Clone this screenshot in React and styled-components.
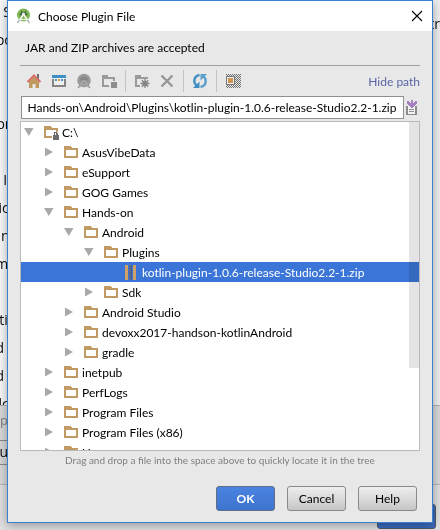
import React, { useEffect, useRef } from "react";
import styled, { createGlobalStyle, css } from "styled-components";

const GlobalStyle = createGlobalStyle`
  * { box-sizing: border-box; }
  body { margin: 0; font-family: Lato, "Open Sans", sans-serif; font-size: 12px; color: #000; }
  button, input { font: inherit; color: inherit; }
`;

const Page = styled.div`
  position: relative;
  display: flex;
  height: 100vh;
  min-height: 420px;
  padding: 0 7px 7px;
  overflow: hidden;
`;

/* ---------- window behind the dialog ---------- */
const Backdrop = styled.div`
  position: absolute;
  inset: 0;
  display: flex;
  flex-direction: column;
  background: #e0e0e0;
  overflow: hidden;
  font-family: "Open Sans", sans-serif;
  font-size: 14px;
  color: #111;
`;
const BackdropBody = styled.div`
  display: flex;
  flex: none;
  justify-content: space-between;
  height: 405px;
  background: linear-gradient(90deg, #fafafa 50%, #f0f0f0 50%);
  overflow: hidden;
`;
const Lines = styled.div`
  display: flex;
  flex-direction: column;
  align-items: center;
  width: 7px;
  padding-top: 12px;
  line-height: 0;
  white-space: pre;
`;
const Line = styled.span`
  flex: none;
  height: 28px;
`;
const Side = styled.div`
  display: flex;
  justify-content: flex-end;
  width: 8px;
  padding-top: 14px;
  line-height: 20px;
  white-space: nowrap;
`;
const BackdropPanel = styled.div`
  display: flex;
  flex: none;
  flex-direction: column;
  height: 80px;
  padding-top: 4px;
  gap: 10px;
  background: #dadada;
  border-top: 1px solid #b4b4b4;
  border-bottom: 1px solid #b4b4b4;
  line-height: 20px;
`;
const Faded = styled.span`
  color: #808080;
  font-size: 13px;
`;
const BackdropField = styled.div`
  display: flex;
  flex: none;
  justify-content: flex-end;
  width: 8px;
  height: 25px;
  border: solid #8c8c8c;
  border-width: 1px 0;
  background: #d8d8d8;
  line-height: 22px;
`;
const BackdropFooter = styled.div`
  display: flex;
  flex: 1;
  align-items: flex-end;
  justify-content: flex-end;
  padding: 0 4px 1px;
`;
const BackdropAction = styled.div`
  width: 59px;
  height: 25px;
  border: 1px solid #555b66;
  border-radius: 3px;
  background: #3a6bbf;
`;

/* ---------- dialog ---------- */
const Dialog = styled.section`
  position: relative;
  display: flex;
  flex-direction: column;
  flex: 1;
  min-width: 0;
  border: 1px solid #3a80cc;
  background: #e8e8e8;
  box-shadow: 0 2px 10px rgba(0, 0, 0, 0.35);
`;
const TitleBar = styled.header`
  display: flex;
  align-items: center;
  gap: 6px;
  flex: none;
  height: 30px;
  padding: 0 9px 0 8px;
  background: #fff;
`;
const Title = styled.h1`
  flex: 1;
  margin: 0;
  font-size: 12px;
  font-weight: 400;
`;
const IconButton = styled.button`
  display: flex;
  align-items: center;
  justify-content: center;
  flex: none;
  width: ${(p) => p.$width || 16}px;
  height: 16px;
  padding: 0;
  border: 0;
  background: none;
`;
const Content = styled.div`
  display: flex;
  flex-direction: column;
  flex: 1;
  min-height: 0;
  padding: 0 12px;
`;
const Prompt = styled.p`
  flex: none;
  margin: 0;
  height: 34px;
  padding-left: 5px;
  line-height: 34px;
`;
const Toolbar = styled.div`
  display: flex;
  align-items: center;
  flex: none;
  height: 31px;
  padding-left: 6px;
  gap: 9px;
  border-top: 1px solid #a0a0a0;
`;
const Divider = styled.span`
  width: 1px;
  height: 22px;
  margin: 0 -1px;
  background: #c4c4c4;
`;
const HideLink = styled.a`
  margin-left: auto;
  color: #5a66a6;
  text-decoration: none;
`;
const PathRow = styled.div`
  display: flex;
  align-items: center;
  flex: none;
  height: 23px;
`;
const PathInput = styled.input`
  flex: 1;
  min-width: 0;
  height: 23px;
  margin-left: 1px;
  padding: 0 7px 0 5px;
  border: 1px solid #8f8f8f;
  border-radius: 0;
  background: #fff;
  outline: 0;
`;
const TreeBox = styled.div`
  display: flex;
  flex: 1;
  min-height: 0;
  margin-top: 2px;
  border: 1px solid #b9b9b9;
  background: #fff;
  overflow: hidden;
`;
const Tree = styled.div`
  flex: 1;
  min-width: 0;
`;
const Row = styled.div`
  display: flex;
  align-items: center;
  height: 20px;
  padding-left: ${(p) => 2 + p.$level * 20}px;
  white-space: nowrap;
  ${(p) =>
    p.$selected &&
    css`
      color: #fff;
      background: #3a75d7;
    `}
`;
const Toggle = styled.button`
  display: flex;
  flex: none;
  width: 20px;
  height: 20px;
  padding: 5px 0 0 1px;
  border: 0;
  background: none;
`;
const Spacer = styled.span`
  flex: none;
  width: 20px;
`;
const Label = styled.span`
  margin-left: 3px;
`;
const ScrollThumb = styled.div`
  flex: none;
  width: 10px;
  height: 246px;
  margin-left: -10px;
  background: #e4e4e4;
  mix-blend-mode: multiply;
`;
const Hint = styled.p`
  flex: none;
  margin: 0;
  height: 18px;
  line-height: 18px;
  font-size: 10px;
  text-align: center;
  color: #808080;
`;
const Actions = styled.footer`
  display: flex;
  justify-content: flex-end;
  flex: none;
  gap: 12px;
  padding: 17px 3px 11px 0;
`;
const Button = styled.button`
  width: 59px;
  height: 25px;
  padding: 0;
  border: 1px solid ${(p) => (p.$primary ? "#5f6e88" : "#8a8a8a")};
  border-radius: 3px;
  background: ${(p) => (p.$primary ? "linear-gradient(#4a83e0, #3d74cf)" : "linear-gradient(#eeeeee, #c6c6c6)")};
  color: ${(p) => (p.$primary ? "#fff" : "#000")};
  font-weight: ${(p) => (p.$primary ? 700 : 400)};
`;

/* ---------- icons ---------- */
const Svg = ({ children }) => (
  <svg width="16" height="16" viewBox="0 0 16 16" shapeRendering="crispEdges" aria-hidden="true">
    {children}
  </svg>
);
const SmoothSvg = ({ children }) => (
  <svg width="16" height="16" viewBox="0 0 16 16" aria-hidden="true">
    {children}
  </svg>
);
const StudioIcon = () => (
  <SmoothSvg>
    <circle cx="7.5" cy="7" r="6.5" fill="#7db653" />
    <path d="M3.500 7.500a4 3.800 0 0 1 8 0z" fill="#4b6c3c" />
    <path d="M5 2.500l1 2M10 2.500L9 4.500" stroke="#4b6c3c" />
    <path d="M7.500 6L3 13.500M7.500 6l4.500 7.500" stroke="#f1f3f1" strokeWidth="1.600" fill="none" />
    <path d="M3.500 10.500q4 2.500 8 0" stroke="#f1f3f1" strokeWidth="1.200" fill="none" />
    <circle cx="7.500" cy="6" r="1.500" fill="#e9ece9" />
    <path d="M1.500 15l2-3M13.500 15l-2-3" stroke="#b8b8b8" strokeWidth="1.400" />
  </SmoothSvg>
);
const CloseIcon = () => (
  <svg width="12" height="12" viewBox="0 0 12 12" aria-hidden="true">
    <path d="M1 1l10 10M11 1L1 11" stroke="#000" strokeWidth="1.1" />
  </svg>
);
const HomeIcon = () => (
  <SmoothSvg>
    <path d="M11 1h2v6l-2-2z" fill="#6f6f6f" />
    <path d="M3 8.500l5-5 5 5V15h-3.500v-4h-3v4H3z" fill="#c19a62" />
    <path d="M1.500 9L8 2.500 14.500 9" stroke="#d8706c" strokeWidth="2" fill="none" />
  </SmoothSvg>
);
const DesktopIcon = () => (
  <Svg>
    <path d="M1 2h14v3H1z" fill="#3d8fc6" />
    <path d="M1 6h14v8H1z" fill="#858585" />
    <path d="M3 5h10v7H3z" fill="#f0f0f0" />
    <path d="M4 6h2v2H4zM10 6h2v2h-2z" fill="#4d93bd" />
    <path d="M7 6h2v2H7z" fill="#d79a4b" />
  </Svg>
);
const ProjectIcon = () => (
  <SmoothSvg>
    <circle cx="8" cy="7.500" r="6.800" fill="#999" />
    <path d="M4 7.500a4 4 0 0 1 8 0z" fill="#878787" />
    <path d="M7.500 7L3.500 14M8.500 7l4 7" stroke="#aaa" strokeWidth="1.300" />
    <path d="M4 11q4 2 8 0" stroke="#aaa" fill="none" />
    <path d="M2 15l2.500-3M14 15l-2.500-3" stroke="#999" strokeWidth="1.300" />
  </SmoothSvg>
);
const ModuleIcon = () => (
  <Svg>
    <path d="M1 2h6v2h7v4h-2V6H3v6h5v2H1z" fill="#9a9a9a" />
    <path d="M10 9h6v6h-6z" fill="#8d8d8d" />
  </Svg>
);
const NewFolderIcon = () => (
  <SmoothSvg>
    <path d="M1 2h6v2h7v2H3v6h3v2H1z" fill="#9a9a9a" />
    <path d="M11 6v9M6.500 10.500h9M7.800 7.300l6.400 6.400M14.200 7.300l-6.400 6.400" stroke="#858585" strokeWidth="1.300" />
    <circle cx="11" cy="10.500" r="2.600" fill="#858585" />
  </SmoothSvg>
);
const DeleteIcon = () => (
  <SmoothSvg>
    <path d="M2.500 2.500l11 11M13.500 2.500l-11 11" stroke="#969696" strokeWidth="2.400" />
  </SmoothSvg>
);
const RefreshIcon = () => (
  <SmoothSvg>
    <path d="M7.500 2Q2.300 3 2.300 8q0 3 2.200 4.500" stroke="#3f8fc4" strokeWidth="2.400" fill="none" />
    <path d="M1 15h6.500V8.500z" fill="#3f8fc4" />
    <path d="M8.500 14q5.200-1 5.200-6q0-3-2.200-4.500" stroke="#5aa0cd" strokeWidth="2.400" fill="none" />
    <path d="M15 1H8.500v6.500z" fill="#5aa0cd" />
  </SmoothSvg>
);
const HiddenIcon = () => (
  <Svg>
    <defs>
      <pattern id="checks" width="2" height="2" patternUnits="userSpaceOnUse">
        <path d="M0 0h1v1H0zM1 1h1v1H1z" fill="#707070" />
      </pattern>
    </defs>
    <path d="M1 1h15v14H1z" fill="url(#checks)" />
    <path d="M1 3h9v9H1z" fill="#777" />
    <path d="M2 4h7v7H2z" fill="#eee" />
    <path d="M3 5h5v5H3z" fill="#cf9550" />
  </Svg>
);
const HistoryIcon = () => (
  <Svg>
    <path d="M2 6h11v9H2z" fill="#8c8c8c" />
    <path d="M4 6h7v8H4z" fill="#f3f3f3" />
    <path d="M5 9h5v1H5zM5 11h5v1H5z" fill="#8c8c8c" />
    <path d="M7 0h2v3h1V2h1V1h2v3h-1v1h-1v1h-1v1H9v1H7V7H6V6H5V5H4V4H3V1h2v1h1v1h1z" fill="#a57fc0" />
  </Svg>
);
const FolderIcon = ({ locked }) => (
  <Svg>
    <path fillRule="evenodd" d="M1 2h7v1h1v1h6v10H1zM3 6v6h10V6z" fill="#c19a66" />
    {locked && (
      <>
        <path d="M9 9h1V8h5v1h1v7H9z" fill="#fff" />
        <path fillRule="evenodd" d="M11 8h3v1h1v2h1v5h-6v-5h1zM12 9v2h1V9z" fill="#6d6d6d" />
      </>
    )}
  </Svg>
);
const ZipIcon = () => (
  <Svg>
    <path d="M2 1h3v15H2zM10 1h3v15h-3z" fill="#cfa164" />
    <path d="M6 1h3v15H6z" fill="#3f5f9c" />
    <path d="M7 1v15" stroke="#6b7484" strokeWidth="2" strokeDasharray="1 1" />
  </Svg>
);
const Arrow = ({ open }) => (
  <svg width="10" height="10" viewBox="0 0 10 10" aria-hidden="true">
    <path d={open ? "M0 1h9.500L4.800 9z" : "M1 0.500v9L9 5z"} fill="#a9a9a9" />
  </svg>
);

/* ---------- data ---------- */
const tools = [
  ["Home", HomeIcon],
  ["Desktop", DesktopIcon],
  ["Project directory", ProjectIcon],
  ["Module directory", ModuleIcon],
  null,
  ["New folder", NewFolderIcon],
  ["Delete", DeleteIcon],
  null,
  ["Refresh", RefreshIcon],
  null,
  ["Show hidden files", HiddenIcon],
];

const nodes = [
  { name: "C:\\", level: 0, open: true, locked: true },
  { name: "AsusVibeData", level: 1 },
  { name: "eSupport", level: 1 },
  { name: "GOG Games", level: 1 },
  { name: "Hands-on", level: 1, open: true },
  { name: "Android", level: 2, open: true },
  { name: "Plugins", level: 3, open: true },
  { name: "kotlin-plugin-1.0.6-release-Studio2.2-1.zip", level: 4, file: true },
  { name: "Sdk", level: 3 },
  { name: "Android Studio", level: 2 },
  { name: "devoxx2017-handson-kotlinAndroid", level: 2 },
  { name: "gradle", level: 2 },
  { name: "inetpub", level: 1 },
  { name: "PerfLogs", level: 1 },
  { name: "Program Files", level: 1 },
  { name: "Program Files (x86)", level: 1 },
  { name: "Users", level: 1 },
];

const backdropLines = ["  S", "oc", "", "", "or", "", " I", "ic", "in", "m ", "", "ti", "d  ", "d  ", "lc"];

export default function App() {
  const pathRef = useRef(null);
  useEffect(() => {
    pathRef.current.scrollLeft = pathRef.current.scrollWidth;
  }, []);

  return (
    <Page>
      <GlobalStyle />
      <Backdrop aria-hidden="true">
        <BackdropBody>
          <Lines>
            {backdropLines.map((text, i) => (
              <Line key={i}>{text}</Line>
            ))}
          </Lines>
          <Side>str</Side>
        </BackdropBody>
        <BackdropPanel>
          <Faded>p</Faded>
          <BackdropField>olu</BackdropField>
        </BackdropPanel>
        <BackdropFooter>
          <BackdropAction />
        </BackdropFooter>
      </Backdrop>

      <Dialog role="dialog" aria-labelledby="dialog-title">
        <TitleBar>
          <StudioIcon />
          <Title id="dialog-title">Choose Plugin File</Title>
          <IconButton aria-label="Close" $width={12}>
            <CloseIcon />
          </IconButton>
        </TitleBar>
        <Content>
          <Prompt>JAR and ZIP archives are accepted</Prompt>
          <Toolbar>
            {tools.map((tool, i) => {
              if (!tool) return <Divider key={i} />;
              const [label, Icon] = tool;
              return (
                <IconButton key={i} aria-label={label}>
                  <Icon />
                </IconButton>
              );
            })}
            <HideLink href="#path">Hide path</HideLink>
          </Toolbar>
          <PathRow>
            <PathInput
              id="path"
              ref={pathRef}
              aria-label="Path"
              defaultValue={"C:\\Hands-on\\Android\\Plugins\\kotlin-plugin-1.0.6-release-Studio2.2-1.zip"}
            />
            <IconButton aria-label="Recent paths">
              <HistoryIcon />
            </IconButton>
          </PathRow>
          <TreeBox>
            <Tree role="tree" aria-label="Files">
              {nodes.map((n) => (
                <Row key={n.name} role="treeitem" aria-level={n.level + 1} aria-selected={!!n.file} $level={n.level} $selected={n.file}>
                  {n.file ? (
                    <Spacer />
                  ) : (
                    <Toggle aria-label={`Toggle ${n.name}`} aria-expanded={!!n.open}>
                      <Arrow open={n.open} />
                    </Toggle>
                  )}
                  {n.file ? <ZipIcon /> : <FolderIcon locked={n.locked} />}
                  <Label>{n.name}</Label>
                </Row>
              ))}
            </Tree>
            <ScrollThumb />
          </TreeBox>
          <Hint>Drag and drop a file into the space above to quickly locate it in the tree</Hint>
          <Actions>
            <Button $primary>OK</Button>
            <Button>Cancel</Button>
            <Button>Help</Button>
          </Actions>
        </Content>
      </Dialog>
    </Page>
  );
}
